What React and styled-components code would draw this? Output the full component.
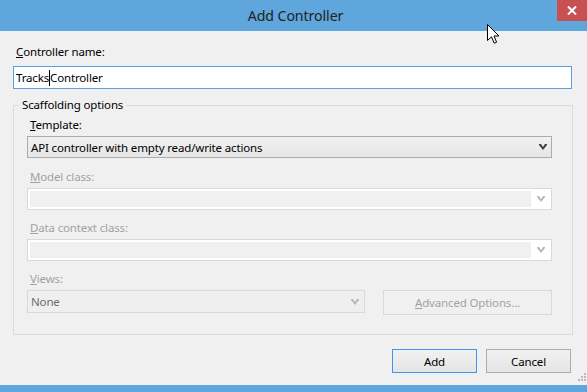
import React from 'react';
import styled, { createGlobalStyle } from 'styled-components';

const GlobalStyle = createGlobalStyle`
  html, body {
    margin: 0;
    padding: 0;
    background: #f0f0f0;
  }
  body {
    font-family: "Segoe UI", "Noto Sans", "Liberation Sans", sans-serif;
    font-size: 11.5px;
    letter-spacing: -0.15px;
    color: #000;
  }
`

const Chevron = ({ color }) => (
  <svg width="8" height="6" viewBox="0 0 8 6">
    <path d="M0 0 L2 0 L4 3 L6 0 L8 0 L8 1 L4 6 L0 1 Z" fill={color} />
  </svg>
);

const Cursor = () => (
  <CursorWrap>
    <svg width="13" height="21" viewBox="0 0 13 21">
      <path
        d="M0.5 0.5 L0.5 16.5 L4.5 12.8 L7.2 19.2 L9.6 18.2 L7 12 L12 12 Z"
        fill="#fff"
        stroke="#000"
        strokeWidth="1"
        strokeLinejoin="miter"
      />
    </svg>
  </CursorWrap>
);

const Grip = () => (
  <GripWrap>
    <svg width="10" height="10" viewBox="0 0 10 10">
      {[[8, 0], [5, 3], [8, 3], [2, 6], [5, 6], [8, 6]].map(([x, y]) => (
        <rect key={x + '-' + y} x={x} y={y} width="2" height="2" fill="#b9b9b9" />
      ))}
    </svg>
  </GripWrap>
);

const App = () => (
  <>
    <GlobalStyle />
    <Window>
      <TitleBar>
        <span />
        <Title>Add Controller</Title>
        <CloseButton>
          <svg width="10" height="9" viewBox="0 0 10 9">
            <path d="M1 0.5 L9 8.5 M9 0.5 L1 8.5" stroke="#fff" strokeWidth="2" />
          </svg>
        </CloseButton>
      </TitleBar>

      <Body>
        <NameLabel><u>C</u>ontroller name:</NameLabel>
        <NameInput>
          Tracks<Caret />Controller
        </NameInput>

        <Group>
          <Legend>Scaffolding options</Legend>
          <GroupInner>
            <FieldLabel><u>T</u>emplate:</FieldLabel>
            <Select>
              <span>API controller with empty read/write actions</span>
              <Chevron color="#3f3f3f" />
            </Select>

            <FieldLabel disabled gap={11}><u>M</u>odel class:</FieldLabel>
            <Combo>
              <ComboField />
              <ComboArrow><Chevron color="#b8b8b8" /></ComboArrow>
            </Combo>

            <FieldLabel disabled gap={10}><u>D</u>ata context class:</FieldLabel>
            <Combo>
              <ComboField />
              <ComboArrow><Chevron color="#b8b8b8" /></ComboArrow>
            </Combo>

            <FieldLabel disabled gap={10}><u>V</u>iews:</FieldLabel>
            <ViewsRow>
              <ViewsSelect>
                <span>None</span>
                <Chevron color="#b8b8b8" />
              </ViewsSelect>
              <AdvancedButton><u>A</u>dvanced Options...</AdvancedButton>
            </ViewsRow>
          </GroupInner>
        </Group>

        <ButtonRow>
          <Button primary>Add</Button>
          <Button>Cancel</Button>
        </ButtonRow>
      </Body>

      <BottomStrip />
      <Grip />
      <Cursor />
    </Window>
  </>
);

export default App;

const Window = styled.div`
  position: relative;
  width: 587px;
  height: 392px;
  display: flex;
  flex-direction: column;
  background: #f0f0f0;
  overflow: hidden;
`

const TitleBar = styled.div`
  height: 31px;
  flex: none;
  background: #5fa6dc;
  display: grid;
  grid-template-columns: 1fr auto 1fr;
  align-items: start;
`

const Title = styled.div`
  font-size: 14.2px;
  letter-spacing: -0.1px;
  line-height: 31px;
  color: #222;
  padding-left: 4px;
`

const CloseButton = styled.div`
  justify-self: end;
  width: 30px;
  height: 21px;
  background: #c75050;
  display: flex;
  align-items: center;
  justify-content: center;
`

const Body = styled.div`
  flex: 1;
  display: flex;
  flex-direction: column;
  padding: 0 15px 0 13px;
`

const NameLabel = styled.div`
  margin-top: 13px;
  padding-left: 3px;
  line-height: 16px;
  height: 16px;
`

const NameInput = styled.div`
  margin-top: 6px;
  width: 559px;
  height: 23px;
  box-sizing: border-box;
  border: 1px solid #5aa0e0;
  background: #fff;
  padding-left: 2px;
  display: flex;
  align-items: center;
  line-height: 16px;
`

const Caret = styled.span`
  display: inline-block;
  width: 1px;
  height: 16px;
  background: #000;
`

const Group = styled.fieldset`
  margin: 8px 0 0 0;
  padding: 0;
  width: 560px;
  box-sizing: border-box;
  height: 238px;
  border: 1px solid #dcdcdc;
  min-width: 0;
`

const Legend = styled.legend`
  margin-left: 5px;
  padding: 0 3px;
  line-height: 16px;
  color: #000;
`

const GroupInner = styled.div`
  display: flex;
  flex-direction: column;
  padding: 4px 20px 0 13px;
`

const FieldLabel = styled.div`
  padding-left: 3px;
  line-height: 16px;
  height: 16px;
  margin-top: ${props => props.gap || 0}px;
  margin-bottom: 3px;
  color: ${props => props.disabled ? '#a2a2a2' : '#000'};
`

const Select = styled.div`
  height: 22px;
  box-sizing: border-box;
  border: 1px solid #acacac;
  background: linear-gradient(#f1f1f1, #e6e6e6);
  display: flex;
  align-items: center;
  justify-content: space-between;
  padding: 0 4px 0 3px;
`

const Combo = styled.div`
  height: 22px;
  box-sizing: border-box;
  border: 1px solid #d9d9d9;
  background: #fff;
  display: flex;
  padding: 2px 0 2px 2px;
`

const ComboField = styled.div`
  flex: 1;
  background: #f0f0f0;
`

const ComboArrow = styled.div`
  width: 20px;
  display: flex;
  align-items: center;
  justify-content: center;
`

const ViewsRow = styled.div`
  display: flex;
  align-items: flex-start;
  justify-content: space-between;
`

const ViewsSelect = styled.div`
  width: 338px;
  height: 23px;
  box-sizing: border-box;
  border: 1px solid #d9d9d9;
  background: #efefef;
  color: #6d6d6d;
  display: flex;
  align-items: center;
  justify-content: space-between;
  padding: 0 5px 0 3px;
`

const AdvancedButton = styled.div`
  width: 169px;
  height: 25px;
  box-sizing: border-box;
  border: 1px solid #d9d9d9;
  background: #f0f0f0;
  color: #a2a2a2;
  display: flex;
  align-items: center;
  justify-content: center;
`

const ButtonRow = styled.div`
  display: flex;
  justify-content: flex-end;
  gap: 9px;
  margin-top: 14px;
  padding-right: 1px;
`

const Button = styled.div`
  width: 85px;
  height: 24px;
  box-sizing: border-box;
  border: 1px solid ${props => props.primary ? '#3c97e8' : '#acacac'};
  background: linear-gradient(#f1f1f1, #e5e5e5);
  display: flex;
  align-items: center;
  justify-content: center;
  color: #000;
`

const BottomStrip = styled.div`
  height: 7px;
  flex: none;
  background: #5fa6dc;
`

const GripWrap = styled.div`
  position: absolute;
  right: 1px;
  bottom: 9px;
  line-height: 0;
`

const CursorWrap = styled.div`
  position: absolute;
  left: 487px;
  top: 24px;
  line-height: 0;
`
